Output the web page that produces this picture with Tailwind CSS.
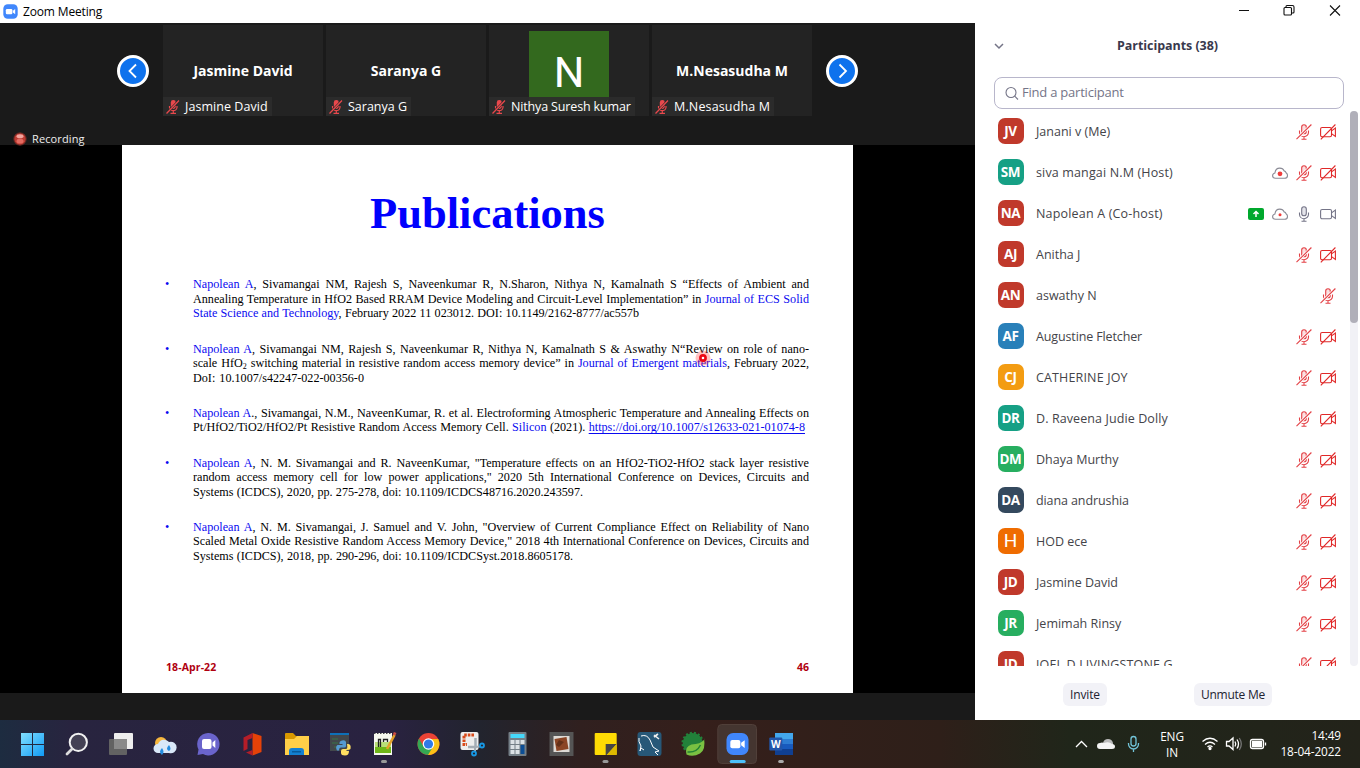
<!DOCTYPE html>
<html lang="en">
<head>
<meta charset="utf-8">
<title>Zoom Meeting</title>
<script src="https://cdn.jsdelivr.net/npm/@tailwindcss/browser@4"></script>
</head>
<body class="w-[1360px] h-[768px] overflow-hidden flex flex-col bg-white font-['Open_Sans','Noto_Sans',sans-serif]">
<svg class="hidden">
  <symbol id="zoom" viewBox="0 0 24 24"><rect x=".5" y=".5" width="23" height="23" rx="7" fill="#4087fc"/><rect x="4.500" y="7.800" width="10.500" height="8.600" rx="2" fill="#fff"/><path d="M15.800 10.800 19.500 8v8.200l-3.700-2.800z" fill="#fff"/></symbol>
  <symbol id="micoff" viewBox="0 0 16 16"><g fill="none" stroke="#e34045" stroke-width="1.100"><rect x="5.700" y=".8" width="4.600" height="9" rx="2.300" fill="#fbdfe0"/><path d="M3.500 6.500v1.700a4.500 4.500 0 0 0 9 0V6.500M8 12.700v2.300M5.500 15.200h5"/><path d="M.5 15.200 15.400.5" stroke="#fff" stroke-width="2.600"/><path d="M.5 15.200 15.400.5"/></g></symbol>
  <symbol id="mic" viewBox="0 0 16 16"><g fill="none" stroke="#747487" stroke-width="1.100"><rect x="5.700" y=".8" width="4.600" height="9" rx="2.300" fill="#e4e4ea"/><path d="M3.500 6.500v1.700a4.500 4.500 0 0 0 9 0V6.500M8 12.700v2.300M5.500 15.200h5"/></g></symbol>
  <symbol id="camoff" viewBox="0 0 16 16"><g fill="none" stroke="#e02828" stroke-width="1.100"><rect x=".6" y="3.500" width="10.900" height="9.200" rx="1.500"/><path d="M11.500 6.900 15.400 4v8.500l-3.900-2.900M.8 15.400 15.400.5"/></g></symbol>
  <symbol id="cam" viewBox="0 0 16 16"><g fill="none" stroke="#747487" stroke-width="1.100"><rect x=".6" y="3.500" width="10.900" height="9.200" rx="1.500"/><path d="M11.500 6.900 15.400 4v8.500l-3.900-2.900"/></g></symbol>
  <symbol id="cloud" viewBox="0 0 16 16"><path d="M3.500 13.300C1.500 13.300.6 12.200.6 10.800S1.600 8.300 2.900 8C3.300 5 5 3.100 7.800 3.100c2.200 0 3.600 1 4.300 2.800 1 .1 1.700.8 1.900 1.800 1.100.6 1.500 1.600 1.500 2.700 0 1.700-1.200 2.900-3 2.900z" fill="none" stroke="#8a8a95" stroke-width="1.100"/></symbol>
  <symbol id="tilemic" viewBox="0 0 14 14"><rect x="4.800" y="0" width="5" height="9" rx="2.400" fill="#e8484c"/><path d="M3.500 6v1.500a3.800 3.800 0 0 0 7.500 0V6M7.300 11v2M4.500 13.300h5.500" fill="none" stroke="#e8484c" stroke-width="1.200"/><path d="M.5 13.500 13 .5" stroke="#2a2a2a" stroke-width="2.400"/><path d="M.5 13.500 13 .5" stroke="#e8484c" stroke-width="1.300"/></symbol>
</svg>

<header class="h-[23px] shrink-0 flex items-center justify-between bg-white text-black">
  <div class="flex items-center gap-[5px] pl-[3px] text-[12px] tracking-[-0.15px]"><svg class="size-[15px]"><use href="#zoom"/></svg><span class="mt-px">Zoom Meeting</span></div>
  <svg class="w-[130px] h-[23px]" viewBox="0 0 130 23" fill="none" stroke="#111" stroke-width="1.100"><path d="M9 10.500h10M100 5.500l10 10M110 5.500l-10 10"/><rect x="54" y="7.500" width="7.500" height="7.500" rx="1"/><path d="M56 7.500V6.500q0-1 1-1h5.500q1.500 0 1.500 1.500V12q0 1-1 1H61.500"/></svg>
</header>

<main class="h-[697px] shrink-0 flex">
  <section class="w-[975px] flex flex-col bg-[#1a1a1a] text-white">
    <div class="h-[122px] flex pl-[117px] pt-[2px] items-start">
      <svg class="mt-[30px] mr-[14px] size-8" viewBox="0 0 32 32"><circle cx="16" cy="16" r="14.500" fill="#0e72ed" stroke="#fff" stroke-width="3"/><path d="M19 9.500 12.500 16l6.500 6.500" fill="none" stroke="#fff" stroke-width="1.800"/></svg>
      <div id="tiles" class="flex gap-[3px]"></div>
      <svg class="mt-[30px] ml-[14px] size-8" viewBox="0 0 32 32"><circle cx="16" cy="16" r="14.500" fill="#0e72ed" stroke="#fff" stroke-width="3"/><path d="M13.500 9.500 20 16l-6.500 6.500" fill="none" stroke="#fff" stroke-width="1.800"/></svg>
    </div>
    <div class="h-[548px] relative bg-black flex justify-center">
      <div class="absolute left-[13px] -top-[14px] h-4 flex items-center gap-[5px] text-[11px] tracking-[0.12px] text-[#eee]"><svg class="size-[14px]" viewBox="0 0 14 14"><circle cx="7" cy="7" r="6.200" fill="#bd3b32" stroke="#5c2622"/><ellipse cx="7" cy="4.200" rx="3.500" ry="2" fill="#f3a49d"/><ellipse cx="7" cy="9.200" rx="3.500" ry="2.400" fill="#e36b61"/></svg><span>Recording</span></div>
      <article class="relative w-[731px] h-[548px] bg-white text-black font-['Liberation_Serif',serif] flex flex-col">
        <h1 class="mt-[42px] h-[52px] leading-[52px] text-center text-[44.5px] font-bold text-[#0000fd]">Publications</h1>
        <div id="refs" class="mt-[38.3px] pl-[43px] flex flex-col gap-[20.8px] text-[12.150px] leading-[14.5px]"></div>
        <footer class="mt-auto mb-[18px] pl-[44px] pr-[44px] flex justify-between leading-[15px] text-[10.500px] font-bold text-[#b00010] font-['Open_Sans',sans-serif]"><span class="tracking-[0.1px]">18-Apr-22</span><span>46</span></footer>
        <svg class="absolute left-[573px] top-[205px] size-4" viewBox="0 0 16 16"><circle cx="8" cy="8" r="7.500" fill="#f22" opacity=".28"/><circle cx="8" cy="8" r="2.600" fill="#fff" stroke="#ec0714" stroke-width="2.600"/></svg>
      </article>
    </div>
  </section>

  <aside class="w-[385px] flex flex-col bg-white text-[#444449]">
    <div class="h-[54px] pt-[14px] relative text-center text-[12.500px] leading-[18px] font-bold text-[#39394d]"><svg class="absolute left-[19px] top-[20px] w-[10px] h-[7px]" viewBox="0 0 10 7"><path d="m1 1 4 4 4-4" fill="none" stroke="#747487" stroke-width="1.500"/></svg><span class="tracking-[-0.05px]">Participants (38)</span></div>
    <div class="ml-[19px] w-[350px] h-8 rounded-[8px] border border-[#b8b6cb] flex items-center gap-[2px] pl-[10px] text-[13px] tracking-[-0.22px] text-[#747487]"><svg class="size-[15px]" viewBox="0 0 15 15" fill="none" stroke="#747487" stroke-width="1.100"><circle cx="6" cy="6.500" r="5"/><path d="m9.700 10.200 3.300 3.300"/></svg><span>Find a participant</span></div>
    <div class="h-[557px] flex justify-between overflow-hidden">
      <div id="people" class="w-[344px] pl-[22px] flex flex-col"></div>
      <div class="mt-[2px] mr-[2px] w-2 h-[555px] rounded bg-[#f1f1f6]"><div class="h-[212px] rounded bg-[#b0afb9]"></div></div>
    </div>
    <div class="flex pl-[88px] pt-[17px] gap-[87px] text-[12px] leading-[22px] text-[#222230]"><button class="w-[44px] h-[23px] rounded-[6px] bg-[#f2f2f7] tracking-[-0.15px] whitespace-nowrap">Invite</button><button class="w-[78px] h-[23px] rounded-[6px] bg-[#f2f2f7] tracking-[-0.25px] whitespace-nowrap">Unmute Me</button></div>
  </aside>
</main>

<nav class="h-12 shrink-0 flex justify-between text-white bg-[linear-gradient(90deg,#1d2c40_0,#28243f_70px,#292240_390px,#22242e_480px,#30201f_580px,#351f1b_700px,#2e1f19_940px,#20261a_1070px,#23231a_1360px)]">
  <div class="flex items-start pl-[12px] gap-[4.060px]">
    <svg class="w-10 h-12" viewBox="0 0 40 48"><defs><linearGradient id="w" x1="0" y1="0" x2="1" y2="1"><stop stop-color="#82e0ff"/><stop offset="1" stop-color="#109bf5"/></linearGradient></defs><path d="M9 13h11v11H9zm12 0h11v11H21zM9 25h11v11H9zm12 0h11v11H21z" fill="url(#w)"/></svg>
    <svg class="w-10 h-12" viewBox="0 0 40 48"><circle cx="22.300" cy="22.300" r="8.600" fill="#444154" stroke="#f1f1f1" stroke-width="2"/><path d="m16 29-5 5" stroke="#ddd" stroke-width="2.800" stroke-linecap="round"/></svg>
    <svg class="w-10 h-12" viewBox="0 0 40 48"><rect x="14" y="13" width="19" height="16" rx="1" fill="#eee"/><rect x="9" y="19" width="18" height="16" rx="1" fill="#626262"/><path d="M14 19h13v10H14z" fill="#8a8a8a"/></svg>
    <svg class="w-10 h-12" viewBox="0 0 40 48"><circle cx="17" cy="23" r="6" fill="#f8b73c"/><path d="M14 33a4.500 4.500 0 0 1 0-9 6.500 6.500 0 0 1 11-2A5.800 5.800 0 1 1 25 33z" fill="#d9e8f8"/><path d="M18 28q-4 4 0 7 3-3 0-7zM25 25q-4 4 0 6 3-2 0-6z" fill="#238cdf"/></svg>
    <svg class="w-10 h-12" viewBox="0 0 40 48"><path d="M20 13a11.200 11.200 0 1 1-5 21l-5.500 1 1-5.500A11.200 11.200 0 0 1 20 13z" fill="#6a64cb"/><rect x="14" y="19" width="9.500" height="10" rx="2" fill="#fff"/><path d="m24.500 22.500 2.800-2.500v8l-2.800-2.500z" fill="#fff"/></svg>
    <svg class="w-10 h-12" viewBox="0 0 40 48"><path d="m20.500 13 9 3v16l-9 3.500z" fill="#e54208"/><path d="m20.500 13-9 4.500V31l4-2v-9l5-2zM14 32.500l6.500-2.500v5.500z" fill="#b51d28"/></svg>
    <svg class="w-10 h-12" viewBox="0 0 40 48"><path d="M9 14q0-1 1-1h7l3 3h12q1 0 1 1v5H9z" fill="#d99800"/><path d="M9 19h9l3-3h12v19H9z" fill="#ffcf48"/><path d="M13 35v-4q0-3 3-3h9q3 0 3 3v4z" fill="#1380d2"/><path d="M16 31h9v1.500h-9z" fill="#075a9c"/></svg>
    <svg class="w-10 h-12" viewBox="0 0 40 48"><path d="M10 13h19v18H10z" fill="#42474b"/><path d="M10 13h19v2H10z" fill="#0d70b8"/><path d="M12 19h6m-6 4h6m-4 4h4" stroke="#397547"/><path d="M22 20.500q3.500-.8 4 1.500v4q0 1.500-2 1.500h-3q-2 0-2 3h-2q-2-4 .5-5.500h5v-1h-3q-.5-3 2.500-3.500z" fill="#559bd2"/><path d="M27 24q4.500-.5 3.500 5-.5 1-4 1v1h2.500q0 4.500-4 4.500t-4-2.500v-2q0-2 2-2h3q2 0 1-5z" fill="#ffdf61"/></svg>
    <svg class="w-10 h-12" viewBox="0 0 40 48"><path d="M10 13h18v22H10z" fill="#f6f8ef"/><path d="M11 27h16v6H11z" fill="#6fb719"/><path d="M11 22h16v5H11z" fill="#b9df78"/><path d="M10 13.500h18" stroke="#444" stroke-dasharray="1.500"/><path d="M14.500 27v-7.500h2V27m3-5v-2.500h4V22" fill="none" stroke="#222" stroke-width="1.300"/><path d="m23 29 7.500-14" stroke="#e3a12b" stroke-width="2.600"/><path d="m30 15 1.200-2.500" stroke="#cc4d43" stroke-width="2.800"/><path d="M18.500 41.500h3" stroke="#999" stroke-width="3" stroke-linecap="round"/></svg>
    <svg class="w-10 h-12" viewBox="0 0 40 48"><circle cx="20.500" cy="24" r="11" fill="#ea4335"/><path d="M11 18.500A11 11 0 0 0 20.500 35l5-8.500h-10z" fill="#34a853"/><path d="M20.500 19h9.700A11 11 0 0 1 20 35l5.500-9z" fill="#fbc116"/><circle cx="20.500" cy="24" r="5.800" fill="#fff"/><circle cx="20.500" cy="24" r="4.600" fill="#317ae7"/></svg>
    <svg class="w-10 h-12" viewBox="0 0 40 48"><rect x="8.500" y="12" width="18" height="18" rx="2" fill="#eee"/><path d="M22 15H12v9.500h3" fill="none" stroke="#d84a1b" stroke-width="3" stroke-dasharray="2.600 1"/><path d="M23.500 18v9H16" fill="none" stroke="#a4adb5" stroke-width="2.500"/><path d="m23 27 5-.5m-5 0v5" stroke="#a4adb5" stroke-width="2"/><circle cx="30" cy="25.500" r="2" fill="none" stroke="#1798e4" stroke-width="1.800"/><circle cx="22" cy="33.500" r="2" fill="none" stroke="#1798e4" stroke-width="1.800"/></svg>
    <svg class="w-10 h-12" viewBox="0 0 40 48"><rect x="11.500" y="12" width="18" height="24" rx="1" fill="#747f87"/><path d="M13.500 14h14v4h-14z" fill="#45d8fa"/><path d="M13.500 20h4v4h-4zm5 0h4v4h-4zm5 0h4v4h-4zM13.500 25h4v4h-4zm5 0h4v4h-4zm-5 5h4v4h-4zm5 0h4v4h-4z" fill="#dbe1e5"/><path d="M23.500 25h4v9h-4z" fill="#0c4e95"/></svg>
    <svg class="w-10 h-12" viewBox="0 0 40 48"><path d="M8.500 12h24v24h-24z" fill="#555"/><path d="M12.500 16h16v16h-16z" fill="#dedad5"/><path d="m13.500 19 12-2 2 12-12 2z" fill="#8b4525"/><path d="m18 20 5 2-5 5-3-2" fill="#643018"/></svg>
    <svg class="w-10 h-12" viewBox="0 0 40 48"><rect x="9.700" y="13" width="22" height="22" rx="1" fill="#fedb04"/><path d="M20.700 24h11l-10 11h-1z" fill="#454545"/><path d="m31.700 24-10 11h10z" fill="#ddb900"/><path d="M19 41.500h3" stroke="#999" stroke-width="3" stroke-linecap="round"/></svg>
    <svg class="w-10 h-12" viewBox="0 0 40 48"><rect x="8.500" y="12" width="24" height="24" rx="3" fill="#275878"/><path d="M12 16q6-2 9 4l3 7 6 4-4 1 3 3m-14-5-3-2-1 3 1-5q-3-5-2-8" fill="none" stroke="#fff" stroke-width="1"/><path d="m25 15 5 4M25 17l4-3" stroke="#eee" stroke-width="1.600"/></svg>
    <svg class="w-10 h-12" viewBox="0 0 40 48"><circle cx="19.700" cy="23" r="10" fill="#22813a" stroke="#22813a" stroke-width="2.500" stroke-dasharray="2"/><path d="M31 18q2 12-4 15.500-7 4-13.500 1-2-8 5-10 9-.5 12.500-4.500z" fill="#7ac142"/><path d="M14.500 32q9 1 13-7" fill="none" stroke="#238235" stroke-width="1.500"/></svg>
    <svg class="w-10 h-12" viewBox="0 0 40 48"><rect x=".8" y="4.500" width="38.700" height="39" rx="4" fill="#443530" stroke="#503f39"/><use href="#zoom" x="9" y="12.500" width="23" height="23"/><path d="M14.200 41.500h13" stroke="#4bc0fa" stroke-width="3" stroke-linecap="round"/></svg>
    <svg class="w-10 h-12" viewBox="0 0 40 48"><path d="M14 13h18v6H14z" fill="#43a7ed"/><path d="M14 19h18v5H14z" fill="#2d7cd2"/><path d="M14 24h18v5H14z" fill="#185abd"/><path d="M14 29h18v6H14z" fill="#103f91"/><rect x="8.300" y="17.500" width="13" height="13" rx="1" fill="#2256aa"/><text x="14.800" y="27.700" text-anchor="middle" font-family="Open Sans" font-weight="700" font-size="10" fill="#fff">W</text><path d="M18.700 41.500h2.600" stroke="#aaa" stroke-width="3" stroke-linecap="round"/></svg>
  </div>
  <div class="flex items-center pr-[19px] text-[11.800px] leading-[16px]">
    <svg class="w-[68px] h-12 mr-[15px]" viewBox="0 0 68 48"><path d="m1 27 5.500-5.500L12 27" fill="none" stroke="#fff" stroke-width="1.300"/><path d="M24 27q0-4 4-4 1-4 5-4 4 0 5 4v5H24z" fill="#bbb"/><path d="M25 29a3 3 0 0 1 0-6q2-1 4 0 5-2 8 1 3 0 3 2.500T37 29z" fill="#f4f4f4"/><g fill="none" stroke="#72c4d8" stroke-width="1.300"><rect x="56" y="16.500" width="5" height="9.500" rx="2.500"/><path d="M53.500 23v1a5 5 0 0 0 10 0v-1M58.500 29v3"/></g></svg>
    <div class="w-[28px] text-center whitespace-nowrap tracking-[-0.1px]">ENG<br>IN</div>
    <svg class="w-[66px] h-12 ml-[15px] mr-[12px]" viewBox="0 0 66 48" fill="none" stroke="#fff" stroke-width="1.300"><path d="M1.500 21.500q7.500-6.500 15 0M4 24.500q5-4.500 10 0M6.500 27q2.500-2.200 5 0"/><circle cx="9" cy="28.500" r="1" fill="#fff"/><path d="M25.500 21.500h2.500l4-3.500v11.500l-4-3.500h-2.500zM34 21.500q1.500 2.500 0 5M36 19.500q3 4.500 0 9"/><path d="M38.300 18q4 6 0 12" stroke="#777"/><rect x="49.500" y="19.500" width="13" height="9" rx="2"/><path d="M51.500 21.500h9v5h-9z" fill="#fff"/><path d="M64.500 22.500v3"/></svg>
    <div class="w-[62px] text-right whitespace-nowrap tracking-[-0.1px] -mt-[2px]">14:49<br>18-04-2022</div>
  </div>
</nav>
<script>
const blue = t => `<span class="text-[#0a0af0]">${t}</span>`;
const tiles = [["Jasmine David",109,"tracking-[0.05px]"],["Saranya G",85,"tracking-[0px]"],["Nithya Suresh kumar",146,"tracking-[-0.15px]"],["M.Nesasudha M",122,"tracking-[0.15px]"]];
document.getElementById('tiles').innerHTML = tiles.map(([n,w,tr],i) => `<div class="relative w-[160px] h-[91px] bg-[#232323] flex justify-center items-center">
${i===2 ? '<div class="absolute left-[40px] top-[6px] w-20 h-20 bg-[#33691e] text-center text-[43px] leading-[83px] font-[\'Roboto\',sans-serif]">N</div>' : `<b class="text-[14px] font-bold whitespace-nowrap">${n}</b>`}
<div class="absolute left-0 bottom-0 h-[19px] bg-[#2c2c2c]/90 flex items-center gap-[5px] pl-[3px] text-[12.500px] whitespace-nowrap ${tr}" style="width:${w}px"><svg class="size-[14px]"><use href="#tilemic"/></svg><span class="mt-px">${n}</span></div></div>`).join('');

const N = blue('Napolean A');
const refs = [
 [[N+', Sivamangai NM, Rajesh S, Naveenkumar R, N.Sharon, Nithya N, Kamalnath S “Effects of Ambient and',616],
  ['Annealing Temperature in HfO2 Based RRAM Device Modeling and Circuit-Level Implementation” in '+blue('Journal of ECS Solid'),616],
  [blue('State Science and Technology')+', February 2022 11 023012. DOI: 10.1149/2162-8777/ac557b',446]],
 [[N+', Sivamangai NM, Rajesh S, Naveenkumar R, Nithya N, Kamalnath S &amp; Aswathy N“Review on role of nano-',616],
  ['scale HfO<sub class="text-[8px]">2</sub> switching material in resistive random access memory device” in '+blue('Journal of Emergent materials')+', February 2022,',616],
  ['DoI: 10.1007/s42247-022-00356-0',171]],
 [[blue('Napolean A')+'., Sivamangai, N.M., NaveenKumar, R. et al. Electroforming Atmospheric Temperature and Annealing Effects on',616],
  ['Pt/HfO2/TiO2/HfO2/Pt Resistive Random Access Memory Cell. '+blue('Silicon')+' (2021). <span class="text-[#0a0af0] underline underline-offset-2">https://doi.org/10.1007/s12633-021-01074-8</span>',612]],
 [[N+', N. M. Sivamangai and R. NaveenKumar, "Temperature effects on an HfO2-TiO2-HfO2 stack layer resistive',616],
  ['random access memory cell for low power applications," 2020 5th International Conference on Devices, Circuits and',616],
  ['Systems (ICDCS), 2020, pp. 275-278, doi: 10.1109/ICDCS48716.2020.243597.',390]],
 [[N+', N. M. Sivamangai, J. Samuel and V. John, "Overview of Current Compliance Effect on Reliability of Nano',616],
  ['Scaled Metal Oxide Resistive Random Access Memory Device," 2018 4th International Conference on Devices, Circuits and',616],
  ['Systems (ICDCS), 2018, pp. 290-296, doi: 10.1109/ICDCSyst.2018.8605178.',380]]
];
document.getElementById('refs').innerHTML = refs.map(r => `<div class="flex"><span class="w-[28px] text-[#0a0af0]">•</span><div>${r.map(([t,w]) => `<div class="h-[14.5px] [text-align-last:justify]" style="width:${w}px">${t}</div>`).join('')}</div></div>`).join('');

const people = [["JV","Janani v (Me)","#c0392b"],["SM","siva mangai N.M (Host)","#16a085"],["NA","Napolean A (Co-host)","#c0392b"],["AJ","Anitha J","#c0392b"],["AN","aswathy N","#c0392b"],["AF","Augustine Fletcher","#2980b9"],["CJ","CATHERINE JOY","#f39c12"],["DR","D. Raveena Judie Dolly","#16a085"],["DM","Dhaya Murthy","#27ae60"],["DA","diana andrushia","#34495e"],["H","HOD ece","#ef6c00"],["JD","Jasmine David","#c0392b"],["JR","Jemimah Rinsy","#27ae60"],["JD","JOEL D LIVINGSTONE G","#c0392b"]];
const spaced = {1:"tracking-[0.15px]",2:"tracking-[0.18px]",5:"tracking-[-0.13px]",6:"tracking-[0.15px]",7:"tracking-[0.1px]",9:"tracking-[-0.1px]",13:"tracking-[0.15px]"};
const ic = n => `<svg class="size-4"><use href="#${n}"/></svg>`;
const cloud = r => `<svg class="size-4" viewBox="0 0 16 16"><use href="#cloud"/><circle cx="8" cy="8.800" r="${r}" fill="#f03c3c"/></svg>`;
document.getElementById('people').innerHTML = people.map(([a,n,c],i) => {
  let icons = ic('micoff') + ic('camoff');
  if (i===1) icons = cloud(2.4) + icons;
  if (i===2) icons = '<svg class="size-4" viewBox="0 0 16 16"><rect y="2" width="16" height="12" rx="2" fill="#00a82d"/><path d="M8 11V6M5.500 8 8 5.500 10.500 8" fill="none" stroke="#fff" stroke-width="1.500"/></svg>' + cloud(1.5) + ic('mic') + ic('cam');
  if (i===4) icons = ic('micoff');
  const big = a.length===1 ? "text-[19px] leading-[28px] font-normal font-['Roboto',sans-serif]" : "text-[13.5px] font-bold tracking-[-0.4px]";
  return `<div class="h-[41px] shrink-0 flex items-center w-[339px]"><div class="size-[26px] rounded-[7px] ml-[0.5px] mr-[12.5px] mt-[3px] flex items-center justify-center text-white ${big}" style="background:${c}">${a}</div><span class="flex-1 mt-[5px] text-[12.500px] ${spaced[i] || 'tracking-[0px]'}">${n}</span><div class="flex gap-2 mt-[4px]">${icons}</div></div>`;
}).join('');
</script>
</body>
</html>
